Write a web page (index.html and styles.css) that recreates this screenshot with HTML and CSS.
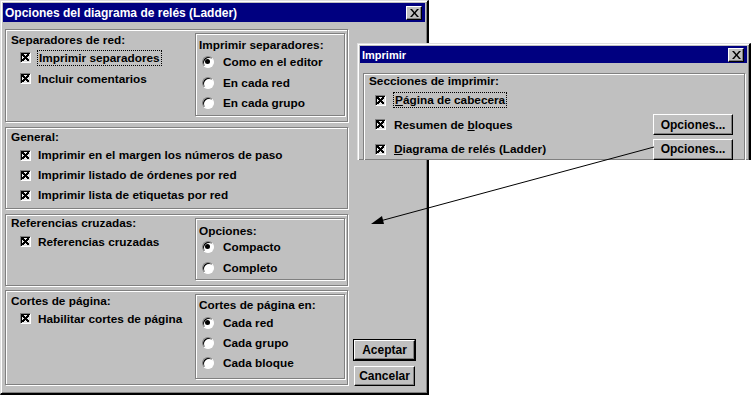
FILE: index.html
```html
<!DOCTYPE html>
<html lang="es">
<head>
<meta charset="utf-8">
<title>Opciones del diagrama de relés (Ladder)</title>
<link rel="stylesheet" href="styles.css">
</head>
<body>
<div class="screen">
  <div class="win main">
    <div class="titlebar">
      <span class="title">Opciones del diagrama de relés (Ladder)</span>
      <span class="closebtn"><svg width="9" height="8" viewBox="0 0 9 8"><path d="M0 0h2l2.5 3 2.5-3h2l-3.5 4 3.5 4h-2l-2.5-3-2.5 3h-2l3.5-4z" fill="#000"/></svg></span>
    </div>
    <div class="body">
      <div class="groups">
        <div class="group g1">
          <div class="gleft">
            <div class="glabel">Separadores de red:</div>
            <div class="row"><span class="chk"></span><span class="focus">Imprimir separadores</span></div>
            <div class="row"><span class="chk"></span><span>Incluir comentarios</span></div>
          </div>
          <div class="inner i1">
            <div class="ilabel">Imprimir separadores:</div>
            <div class="row r"><span class="radio on"></span><span>Como en el editor</span></div>
            <div class="row r"><span class="radio"></span><span>En cada red</span></div>
            <div class="row r"><span class="radio"></span><span>En cada grupo</span></div>
          </div>
        </div>
        <div class="group g2">
          <div class="gleft">
            <div class="glabel">General:</div>
            <div class="row s"><span class="chk"></span><span>Imprimir en el margen los números de paso</span></div>
            <div class="row s"><span class="chk"></span><span>Imprimir listado de órdenes por red</span></div>
            <div class="row s"><span class="chk"></span><span>Imprimir lista de etiquetas por red</span></div>
          </div>
        </div>
        <div class="group g3">
          <div class="gleft">
            <div class="glabel">Referencias cruzadas:</div>
            <div class="row t"><span class="chk"></span><span>Referencias cruzadas</span></div>
          </div>
          <div class="inner i3">
            <div class="ilabel">Opciones:</div>
            <div class="row r"><span class="radio on"></span><span>Compacto</span></div>
            <div class="row r"><span class="radio"></span><span>Completo</span></div>
          </div>
        </div>
        <div class="group g4">
          <div class="gleft">
            <div class="glabel">Cortes de página:</div>
            <div class="row t"><span class="chk"></span><span>Habilitar cortes de página</span></div>
          </div>
          <div class="inner i4">
            <div class="ilabel">Cortes de página en:</div>
            <div class="row q"><span class="radio on"></span><span>Cada red</span></div>
            <div class="row q"><span class="radio"></span><span>Cada grupo</span></div>
            <div class="row q"><span class="radio"></span><span>Cada bloque</span></div>
          </div>
        </div>
      </div>
      <div class="side">
        <button class="btn def">Aceptar</button>
        <button class="btn">Cancelar</button>
      </div>
    </div>
  </div>

  <div class="win print">
    <div class="titlebar small">
      <span class="title">Imprimir</span>
      <span class="closebtn"><svg width="9" height="8" viewBox="0 0 9 8"><path d="M0 0h2l2.5 3 2.5-3h2l-3.5 4 3.5 4h-2l-2.5-3-2.5 3h-2l3.5-4z" fill="#000"/></svg></span>
    </div>
    <div class="pbody">
      <div class="group pg">
        <div class="glabel">Secciones de imprimir:</div>
        <div class="prow"><span class="chk"></span><span class="focus"><u>P</u>ágina de cabecera</span></div>
        <div class="prow"><span class="chk"></span><span>Resumen de <u>b</u>loques</span><button class="btn opt">Opciones...</button></div>
        <div class="prow"><span class="chk"></span><span><u>D</u>iagrama de relés (Ladder)</span><button class="btn opt">Opciones...</button></div>
      </div>
    </div>
  </div>

  <svg class="arrow" width="752" height="397" viewBox="0 0 752 397">
    <line x1="654" y1="147" x2="380" y2="221" stroke="#000" stroke-width="1"/>
    <polygon points="371,224 382,216 384,224" fill="#000"/>
  </svg>
</div>
</body>
</html>
```

FILE: styles.css
```css
* { box-sizing: border-box; }
html, body { margin: 0; padding: 0; background: #fff; }
body { font-family: "Liberation Sans", Arial, sans-serif; font-weight: bold; font-size: 11.8px; color: #000; }

.screen { position: relative; width: 752px; height: 397px; overflow: hidden; background: #fff; }

.win {
  background: #c0c0c0;
  border-style: solid;
  border-width: 1px 2px 2px 1px;
  border-color: #dfdfdf #000 #000 #dfdfdf;
  box-shadow: inset 1px 1px 0 #fff, inset -1px -1px 0 #808080;
  padding: 2px;
}
.main { width: 429px; height: 395px; display: flex; flex-direction: column; }

.titlebar {
  height: 19px;
  background: #000080;
  color: #fff;
  display: flex;
  align-items: center;
  justify-content: space-between;
  padding: 0 3px 0 2px;
  font-size: 12px;
}
.titlebar.small { height: 17px; font-size: 11px; }
.closebtn {
  width: 16px; height: 14px;
  background: #c0c0c0;
  border: 1px solid; border-color: #fff #000 #000 #fff;
  box-shadow: inset -1px -1px 0 #808080;
  display: flex; align-items: center; justify-content: center;
}

.body { flex: 1; display: flex; padding: 7px 0 0 2px; }
.groups { width: 343px; display: flex; flex-direction: column; }
.side { flex: 1; display: flex; flex-direction: column; align-items: flex-start; justify-content: flex-end; padding: 0 0 5px 6px; gap: 6px; }

.group {
  border: 1px solid #808080;
  box-shadow: inset 1px 1px 0 #fff, 1px 1px 0 #fff;
  display: flex;
}
.g1 { height: 93px; }
.g2 { height: 82px; margin-top: 5px; }
.g3 { height: 72px; margin-top: 5px; }
.g4 { height: 95px; margin-top: 4px; }

.gleft { flex: 1; padding: 3px 0 0 5px; }
.glabel { height: 14px; line-height: 14px; }
.row { display: flex; align-items: center; height: 21px; padding-left: 9px; white-space: nowrap; }
.row.s { height: 20px; }
.g2 .gleft { padding-top: 2px; }
.g2 .glabel { height: 15px; }
.g3 .gleft { padding-top: 1px; }
.g3 .glabel { height: 15px; }
.g4 .gleft { padding-top: 3px; }
.g4 .glabel { height: 14px; }
.row .chk { margin-right: 7px; }

.inner {
  width: 150px;
  flex: none;
  margin: 3px 2px 5px 0;
  border: 1px solid #808080;
  box-shadow: inset 1px 1px 0 #fff, 1px 1px 0 #fff;
  padding: 5px 0 0 3px;
}
.ilabel { height: 13px; line-height: 13px; }
.row.r { padding-left: 3px; height: 20.5px; }
.i3 { padding-top: 6px; }
.i3 .ilabel { height: 11px; }
.i3 .row.r { height: 21px; }
.i4 { padding-top: 4px; }
.i4 .ilabel { height: 14px; }
.row.q { height: 20px; padding-left: 3px; }
.row .radio { margin-right: 9px; }

.chk {
  width: 11px; height: 11px; flex: none;
  background: #ececec;
  border: 1px solid; border-color: #808080 #fff #fff #808080;
  box-shadow: inset 1px 1px 0 #000, inset -1px -1px 0 #dfdfdf;
  position: relative;
}
.chk::after {
  content: ""; position: absolute; left: 1px; top: 1px; width: 7px; height: 7px;
  background:
    linear-gradient(45deg, transparent 36%, #000 36%, #000 64%, transparent 64%),
    linear-gradient(-45deg, transparent 36%, #000 36%, #000 64%, transparent 64%);
}
.radio {
  width: 12px; height: 12px; flex: none; border-radius: 50%;
  background: #fff;
  border: 1px solid; border-color: #808080 #fff #fff #808080;
  box-shadow: inset 1px 1px 0 #000;
  position: relative;
}
.radio.on::after {
  content: ""; position: absolute; left: 2px; top: 2px; width: 5px; height: 5px; border-radius: 50%; background: #000;
}
.focus { outline: 1px dotted #000; outline-offset: 0; padding: 0 1px; }

.btn {
  font-family: "Liberation Sans", Arial, sans-serif;
  font-weight: bold; font-size: 12px;
  background: #c0c0c0; color: #000;
  border: 1px solid; border-color: #fff #000 #000 #fff;
  box-shadow: inset -1px -1px 0 #808080;
  padding: 0;
  width: 61px; height: 20px;
}
.btn.def { outline: 1px solid #000; }

.print { position: absolute; left: 357px; top: 43px; width: 394px; height: 117px; overflow: hidden; border-bottom: 0; }
.pbody { padding: 10px 2px 0 3px; }
.pg { flex-direction: column; padding: 0 0 0 5px; height: 120px; }
.prow { display: flex; align-items: center; height: 24.5px; padding-left: 6px; white-space: nowrap; }
.prow .chk { margin-right: 8px; }
.prow .btn { margin-left: auto; margin-right: 11px; }
.btn.opt { width: 80px; height: 21px; }

.arrow { position: absolute; left: 0; top: 0; z-index: 2; }
```
